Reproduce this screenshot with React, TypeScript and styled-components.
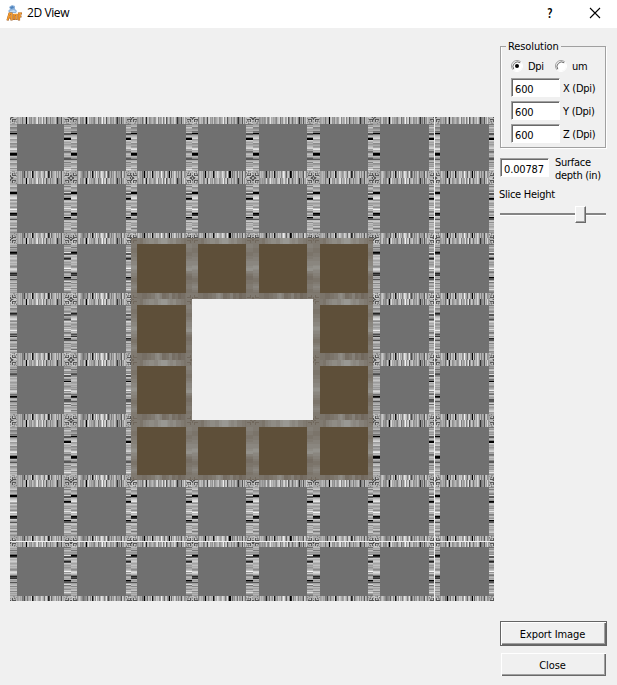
import React from "react";
import styled, { createGlobalStyle } from "styled-components";

const GlobalStyle = createGlobalStyle`
  * { box-sizing: border-box; }
  body { margin: 0; background: #f0f0f0; }
`;

const Window = styled.div`
  width: 617px;
  height: 685px;
  display: flex;
  flex-direction: column;
  background: #f0f0f0;
  color: #000;
  font-family: "DejaVu Sans Condensed", "DejaVu Sans", sans-serif;
  font-stretch: condensed;
  font-size: 11px;
  line-height: 13px;
  letter-spacing: -0.28px;
  overflow: hidden;
`;

const TitleBar = styled.header`
  height: 28px;
  background: #fff;
  display: flex;
  align-items: center;
  padding: 0 16px 3px 6px;
`;

const Title = styled.span`
  flex: 1;
  margin-left: 5px;
  font-family: "Open Sans", sans-serif;
  font-stretch: normal;
  font-size: 12px;
  letter-spacing: -0.4px;
  line-height: 18px;
`;

const HelpMark = styled.span`
  font-family: "Open Sans", sans-serif;
  font-weight: 600;
  font-size: 14px;
  margin-right: 37px;
`;

const Content = styled.main`
  flex: 1;
  display: flex;
  padding: 0 10px 9px;
`;

const Canvas = styled.section`
  width: 484px;
  height: 484px;
  margin-top: 89px;
  flex: none;
  display: grid;
  grid-template-columns: 61px 60px 61px 61px 60px 60px 61px 60px;
  grid-template-rows: 61px 60px 61px 61px 60px 60px 61px 60px;

  svg { display: block; }
`;

const Sidebar = styled.aside`
  width: 107px;
  margin-left: 6px;
  padding-top: 12px;
  display: flex;
  flex-direction: column;
`;

const Group = styled.fieldset`
  width: 106px;
  height: 108px;
  margin: 0;
  padding: 5px 0 0 10px;
  min-width: 0;
  border: 1px solid #a0a0a0;
  box-shadow: 1px 1px 0 #fff, inset 1px 0 0 #fff;
`;

const Legend = styled.legend`
  margin-left: -5px;
  padding: 0 2px;
  height: 13px;
  letter-spacing: -0.1px;
`;

const RadioRow = styled.div`
  display: flex;
  height: 16px;
  margin-bottom: 4px;
  align-items: center;
`;

const RadioOption = styled.label<{ $width: number }>`
  width: ${(p) => p.$width}px;
  display: flex;
  align-items: center;
  gap: 5px;
`;

const FieldRow = styled.div`
  display: flex;
  height: 19px;
  margin-bottom: 4px;
  align-items: center;
  gap: 3px;
  white-space: nowrap;
`;

const FieldLabel = styled.span`
  padding-top: 1px;
`;

const Field = styled.input`
  width: 49px;
  height: 19px;
  flex: none;
  padding: 3px 3px 0;
  border: 1px solid;
  border-color: #a0a0a0 #fff #fff #a0a0a0;
  border-radius: 0;
  background: #fff;
  box-shadow: inset 1px 1px 0 #696969;
  font: inherit;
  letter-spacing: -0.15px;
  color: #000;
  outline: none;
`;

const DepthRow = styled.div`
  display: flex;
  margin-top: 8px;
  height: 26px;
  align-items: flex-start;
  gap: 6px;
  white-space: nowrap;

  input { margin-top: 2px; }
`;

const SliderLabel = styled.div`
  margin-top: 6px;
  margin-left: -1px;
`;

const Slider = styled.div`
  height: 18px;
  width: 106px;
  margin-top: 4px;
  display: flex;
  align-items: center;
`;

const Rail = styled.div<{ $width: number }>`
  width: ${(p) => p.$width}px;
  height: 3px;
  border-top: 2px solid #858585;
  border-bottom: 1px solid #fff;
`;

const Thumb = styled.div`
  width: 11px;
  height: 17px;
  background: #f0f0f0;
  border: 1px solid;
  border-color: #fff #696969 #696969 #fff;
  box-shadow: inset -1px -1px 0 #a0a0a0;
`;

const Actions = styled.div`
  margin-top: auto;
  display: flex;
  flex-direction: column;
  align-items: center;
  gap: 7px;
`;

const Button = styled.button<{ $primary?: boolean }>`
  width: ${(p) => (p.$primary ? 107 : 105)}px;
  height: ${(p) => (p.$primary ? 25 : 23)}px;
  padding: 2px 2px 0 0;
  border: ${(p) => (p.$primary ? "1px solid #646464" : "0")};
  border-radius: 0;
  background: #f0f0f0;
  box-shadow: inset 1px 1px 0 #fff, inset -1px -1px 0 #696969, inset -2px -2px 0 #a0a0a0;
  font: inherit;
  letter-spacing: ${(p) => (p.$primary ? -0.1 : -0.1)}px;
  color: #000;
`;

// Scan-line textures: one hexadecimal brightness digit per pixel along an edge.
const GREY = {
  top: "8ab9a79c90bd9a9b98acd7a9be8bd59bb7aa9cb7388a5b9ca",
  bottom: "8bbaa7709a6bb9c16b9dbb8aeca6bd800b6a9cb7b8a95cb7a",
  left: "aab799a6007bbcda9bb9aa99cebb7003ba95abb8a9bb7baa8",
  right: "7a8bb998d55ba700cbaa99bbe9b77bb9b055ac7baa9bbd997",
};
const BROWN = {
  top: "444333555666777776666888999999877666777555554443322",
  bottom: "33333222223333444466776552222333555222333111222233",
  left: "4444333334444555566667888766655544333344556655443",
  right: "5555444433334445566666778885543322223333444443333",
};
const CORNER = ["a55abbb", "58bbbb9", "5b5555a", "bb5ca8b", "9b5a79a", "abbb9b8", "bba98bb"];

const STARTS = [7, 6, 6, 6, 6, 7, 7, 6];
const INNER = [47, 49, 49, 48, 48, 48, 49, 49];
const SIZES = [61, 60, 61, 61, 60, 60, 61, 60];

function shade(digit: string, brown: boolean, variation: number) {
  const n = parseInt(digit, 16);
  if (brown) {
    const v = n * 5;
    return `rgb(${108 + v},${98 + Math.round(v * 1.2)},${86 + Math.round(v * 1.35)})`;
  }
  let v = n * 17;
  // Dark lines fade differently from one tile to the next.
  if (n === 0) v = [0, 75, 0, 35, 130][(variation * 3) % 5];
  if (n > 5) {
    v = Math.round(168 + (v - 168) * 0.85) + (((variation * 7 + n * 3) % 5) - 2) * 8;
  }
  return `rgb(${v},${v},${v})`;
}

function Tile({ row, col }: { row: number; col: number }) {
  const w = SIZES[col];
  const h = SIZES[row];
  const sx = STARTS[col];
  const sy = STARTS[row];
  const iw = INNER[col];
  const ih = INNER[row];
  const empty = row > 2 && row < 5 && col > 2 && col < 5;
  if (empty) return <svg width={w} height={h} />;

  const brown = row > 1 && row < 6 && col > 1 && col < 6;
  const p = brown ? BROWN : GREY;
  const ex = sx + iw;
  const ey = sy + ih;
  const corners = [
    { x: 0, y: 0, w: sx, h: sy },
    { x: ex, y: 0, w: w - ex, h: sy },
    { x: 0, y: ey, w: sx, h: h - ey },
    { x: ex, y: ey, w: w - ex, h: h - ey },
  ];
  return (
    <svg width={w} height={h} shapeRendering="crispEdges">
      <rect width={w} height={h} fill={brown ? "#827a70" : "#a4a4a4"} />
      {Array.from({ length: iw }, (_, i) => (
        <g key={`v${i}`}>
          <rect x={sx + i} width={1} height={sy} fill={shade(p.top[i], brown, col + i)} />
          <rect x={sx + i} y={ey} width={1} height={h - ey} fill={shade(p.bottom[i], brown, col + i)} />
        </g>
      ))}
      {Array.from({ length: ih }, (_, i) => (
        <g key={`h${i}`}>
          <rect y={sy + i} width={sx} height={1} fill={shade(p.left[i], brown, row + i)} />
          <rect x={ex} y={sy + i} width={w - ex} height={1} fill={shade(p.right[i], brown, row + i)} />
        </g>
      ))}
      {corners.map((c, k) =>
        Array.from({ length: c.w * c.h }, (_, i) => {
          const x = i % c.w;
          const y = Math.floor(i / c.w);
          const d = CORNER[k > 1 ? 6 - y : y][k % 2 ? 6 - x : x];
          return (
            <rect
              key={`${k}-${i}`}
              x={c.x + x}
              y={c.y + y}
              width={1}
              height={1}
              fill={shade(brown ? (d < "6" ? "1" : "4") : d, brown, row + col)}
            />
          );
        })
      )}
      <rect x={sx} y={sy} width={iw} height={ih} fill={brown ? "#5e4f39" : "#707070"} />
      {col === 7 && <rect width={1} height={h} fill="#f0f0f0" />}
      {row === 7 && <rect width={w} height={1} fill="#f0f0f0" />}
    </svg>
  );
}

function AppIcon() {
  return (
    <svg width="16" height="18" viewBox="0 0 16 18">
      <path d="M3 3L6 1L9 2L9 5L11 7L10 9H4L2 7L4 5Z" fill="#91b5dc" />
      <path d="M4 3L7 2L8 4L5 5Z" fill="#4e83bd" />
      <path d="M4 7L8 6L10 8H4Z" fill="#c5dcf1" />
      <g fill="none" stroke="#9a5a26" strokeWidth="2.2">
        <path d="M1.5 16.5L3.5 9.5H5.5V16.5M2.5 13.5H5M8 16V11H10.5V16M13 16.5V9.5H16M13 12.5H15.5" />
      </g>
      <g fill="none" stroke="#f49b2d" strokeWidth="1.5">
        <path d="M1.5 16L3.5 9.5H5.5V16M2.5 13H5M8 15.5V10.5H10.5V15.5M13 16V9.5H15.5M13 12H15" />
      </g>
    </svg>
  );
}

function RadioIcon({ checked }: { checked?: boolean }) {
  return (
    <svg width="12" height="12" viewBox="0 0 12 12">
      <circle cx="6" cy="6" r="5" fill="#fff" />
      <path d="M2.1 9.9A5.5 5.5 0 0 1 9.9 2.1" fill="none" stroke="#a0a0a0" />
      <path d="M2.8 9.2A4.6 4.6 0 0 1 9.2 2.8" fill="none" stroke="#696969" />
      <path d="M9.9 2.1A5.5 5.5 0 0 1 2.1 9.9" fill="none" stroke="#fff" />
      {checked && <circle cx="6" cy="6" r="2" fill="#000" />}
    </svg>
  );
}

export default function App() {
  return (
    <Window>
      <GlobalStyle />
      <TitleBar>
        <AppIcon />
        <Title>2D View</Title>
        <HelpMark>?</HelpMark>
        <svg width="12" height="12" viewBox="0 0 12 12">
          <path d="M1 1L11 11M11 1L1 11" stroke="#000" strokeWidth="1.1" />
        </svg>
      </TitleBar>
      <Content>
        <Canvas>
          {Array.from({ length: 64 }, (_, i) => (
            <Tile key={i} row={Math.floor(i / 8)} col={i % 8} />
          ))}
        </Canvas>
        <Sidebar>
          <Group>
            <Legend>Resolution</Legend>
            <RadioRow>
              <RadioOption $width={44}><RadioIcon checked />Dpi</RadioOption>
              <RadioOption $width={40}><RadioIcon />um</RadioOption>
            </RadioRow>
            {["X", "Y", "Z"].map((axis) => (
              <FieldRow key={axis}>
                <Field defaultValue="600" />
                <FieldLabel>{axis} (Dpi)</FieldLabel>
              </FieldRow>
            ))}
          </Group>
          <DepthRow>
            <Field defaultValue="0.00787" />
            <span>Surface<br />depth (in)</span>
          </DepthRow>
          <SliderLabel>Slice Height</SliderLabel>
          <Slider>
            <Rail $width={75} />
            <Thumb />
            <Rail $width={20} />
          </Slider>
          <Actions>
            <Button $primary>Export Image</Button>
            <Button>Close</Button>
          </Actions>
        </Sidebar>
      </Content>
    </Window>
  );
}
